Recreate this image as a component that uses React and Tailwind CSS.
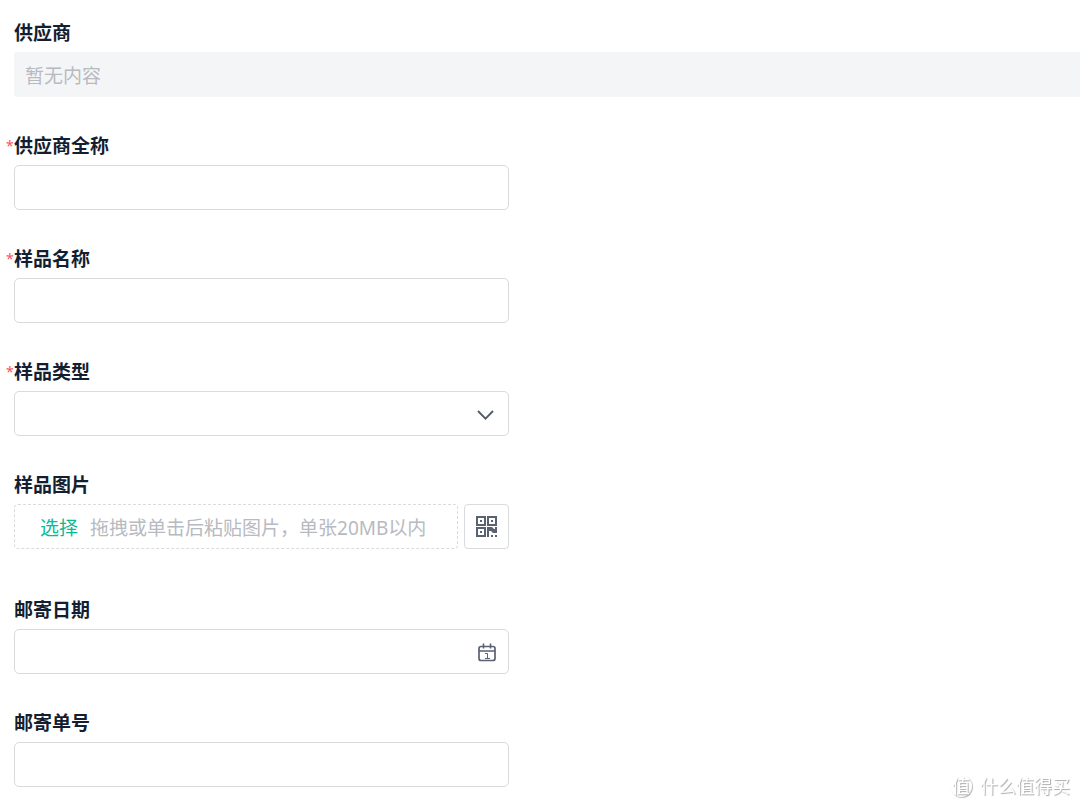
const box = "h-[45px] w-full rounded-[5px] border border-[#d9dbde] bg-white px-3 text-[19px] text-[#141e31] outline-none focus:border-[#0db3a6]";

function Field({ id, label, required, children }) {
  return (
    <div className="flex flex-col gap-[5px]">
      <div className="-ml-2 flex h-7 items-center">
        <span className="w-2 text-[14px] leading-7 text-[#f5535e]" aria-hidden="true">
          {required ? "*" : ""}
        </span>
        <label htmlFor={id} className="text-[19px] leading-7 font-bold text-[#141e31]">
          {label}
        </label>
      </div>
      {children}
    </div>
  );
}

function QrIcon() {
  return (
    <svg width="21" height="21" viewBox="0 0 21 21" fill="#5a6170" aria-hidden="true">
      <path fillRule="evenodd" d="M0 0h10v10H0zM2 2v6h6V2zM11 0h10v10H11zM13 2v6h6V2zM0 11h10v10H0zM2 13v6h6v-6z" />
      <path d="M4 4h2v2H4zM15 4h2v2h-2zM4 15h2v2H4z" />
      <path d="M11 11h5l2 2h1v-2h2v6h-4l-2-2h-2v6h-2zM15 19h2v2h-2zM19 19h2v2h-2z" />
    </svg>
  );
}

function CalendarIcon() {
  return (
    <svg width="18" height="19" viewBox="0 0 18 19" fill="none" stroke="#5a6170" aria-hidden="true">
      <rect x="1" y="3.5" width="16" height="14" rx="2" strokeWidth="1.7" />
      <path d="M1 8h16M5.5 0.5v5M12.5 0.5v5" strokeWidth="1.6" />
      <path d="M7 10.5h2.5v5M7 15.5h5" strokeWidth="1" />
    </svg>
  );
}

export default function App() {
  return (
    <main className="bg-white pt-[19px] pb-5 pl-3.5 font-['Noto_Sans','Noto_Sans_CJK_SC',sans-serif]">
      <form className="flex flex-col gap-[35px]" onSubmit={(e) => e.preventDefault()}>
        <Field id="supplier" label="供应商">
          <input
            id="supplier"
            readOnly
            placeholder="暂无内容"
            className="h-[45px] w-full rounded-l-[3px] bg-[#f4f5f7] px-[11px] pt-0.5 text-[19px] outline-none placeholder:text-[#b7bac0]"
          />
        </Field>
        <div className="flex w-full max-w-[495px] flex-col gap-[35px]">
          <Field id="fullname" label="供应商全称" required>
            <input id="fullname" required className={box} />
          </Field>
          <Field id="sample" label="样品名称" required>
            <input id="sample" required className={box} />
          </Field>
          <Field id="type" label="样品类型" required>
            <div className="relative">
              <select id="type" required defaultValue="" className={box + " appearance-none"}>
                <option value="" />
              </select>
              <svg className="pointer-events-none absolute top-[18px] right-3.5" width="18" height="12" viewBox="0 0 18 12" fill="none" stroke="#525967" strokeWidth="1.8" aria-hidden="true">
                <path d="M1 2 8.5 9.7l7.5-7.7" />
              </svg>
            </div>
          </Field>
          <div className="pb-3">
            <Field id="picture" label="样品图片">
              <div className="flex gap-1.5">
                <button id="picture" type="button" className="flex h-[45px] flex-1 items-center gap-3 rounded-[4px] border border-dashed border-[#d9dbde] pt-1 pl-[25px] text-[19px] whitespace-nowrap">
                  <span className="text-[#0db893]">选择</span>
                  <span className="text-[#b7bac0]">拖拽或单击后粘贴图片，单张20MB以内</span>
                </button>
                <button type="button" aria-label="扫码上传" className="flex size-[45px] items-center justify-center rounded-[4px] border border-[#d9dbde]">
                  <QrIcon />
                </button>
              </div>
            </Field>
          </div>
          <Field id="date" label="邮寄日期">
            <div className="relative">
              <input id="date" className={box} />
              <button type="button" aria-label="选择日期" className="absolute top-3.5 right-[13px]">
                <CalendarIcon />
              </button>
            </div>
          </Field>
          <Field id="tracking" label="邮寄单号">
            <input id="tracking" className={box} />
          </Field>
        </div>
      </form>
      <div className="pointer-events-none fixed right-2.5 bottom-[9px] flex items-center gap-2 text-white [text-shadow:1px_1px_1px_#a8a8a8]">
        <span className="flex size-[22px] items-center justify-center rounded-full text-[18px] leading-none shadow-[1px_1px_1px_#bbbbbb]">值</span>
        <span className="text-[18px] leading-7">什么值得买</span>
      </div>
    </main>
  );
}
